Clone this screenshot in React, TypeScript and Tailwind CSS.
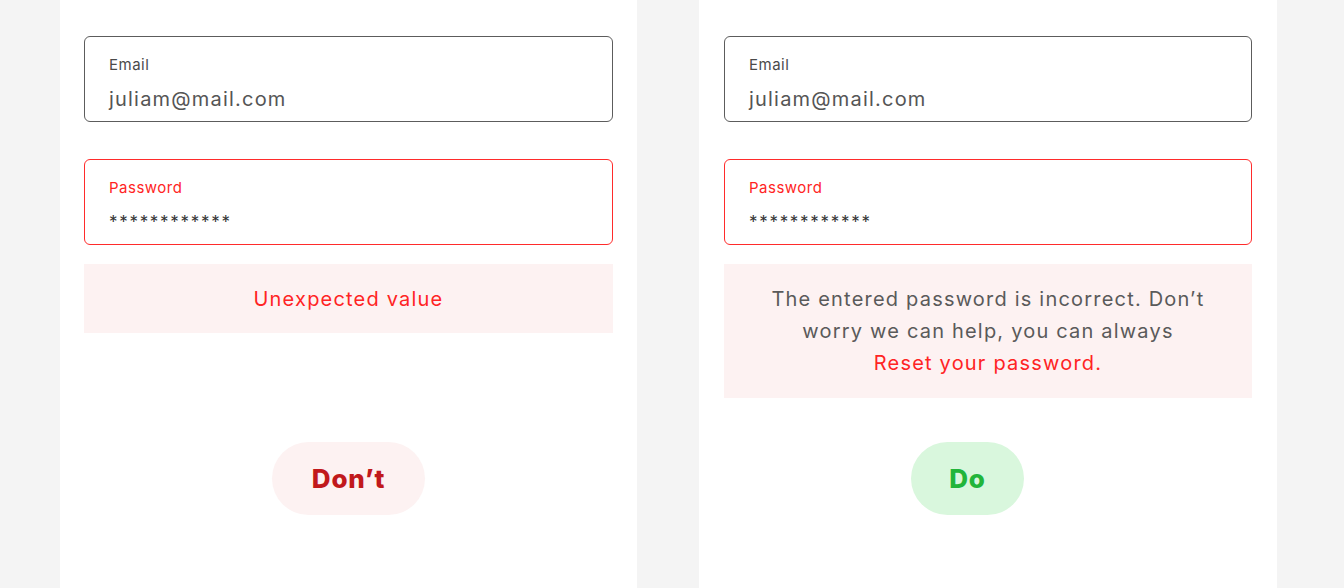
const font = { fontFamily: "Inter, 'Noto Sans', sans-serif" };

function Field({ label, value, error }: { label: string; value: string; error?: boolean }) {
  return (
    <div
      className={`h-[86px] rounded-[6px] border-[1.5px] px-[24px] pt-[17px] ${
        error ? "border-[#ff2b2b]" : "border-[#5c5c5c]"
      }`}
    >
      <div
        className={`text-[15px] leading-[22px] tracking-[0.5px] ${
          error ? "text-[#ff2424]" : "text-[#4a4a4a]"
        }`}
      >
        {label}
      </div>
      <div
        className={`mt-[10px] leading-[26px] ${
          error ? "text-[17px] tracking-[1.7px] text-[#333]" : "text-[20px] tracking-[1.2px] text-[#555]"
        }`}
      >
        {value}
      </div>
    </div>
  );
}

function Panel({
  box,
  children,
  badge,
}: {
  box: string;
  children: React.ReactNode;
  badge: React.ReactNode;
}) {
  return (
    <div className={`${box} h-[588px] bg-white pt-[36px] flex flex-col`}>
      <Field label="Email" value="juliam@mail.com" />
      <div className="mt-[37px]">
        <Field label="Password" value="************" error />
      </div>
      <div className="mt-[19px]">{children}</div>
      {badge}
    </div>
  );
}

export default function App() {
  return (
    <div className="w-[1344px] h-[588px] bg-[#f4f4f4] flex gap-[62px] pl-[60px]" style={font}>
      <Panel
        box="w-[577px] px-[24px]"
        badge={
          <div className="mt-[109px] ml-[188px] w-[153px] h-[73px] rounded-full bg-[#fdf2f2] flex items-center justify-center text-[26px] font-extrabold tracking-[0.8px] text-[#c1191c]">
            Don’t
          </div>
        }
      >
        <div className="h-[69px] bg-[#fdf2f2] flex items-center justify-center text-[20px] tracking-[1.2px] text-[#ff2424]">
          Unexpected value
        </div>
      </Panel>
      <Panel
        box="w-[578px] px-[25px]"
        badge={
          <div className="mt-[44px] ml-[187px] w-[113px] h-[73px] rounded-full bg-[#d9f7dd] flex items-center justify-center text-[26px] font-extrabold tracking-[0.8px] text-[#22b53a]">
            Do
          </div>
        }
      >
        <div className="h-[134px] bg-[#fdf2f2] flex items-center justify-center text-center text-[20px] leading-[32px] tracking-[1.2px] text-[#5a5a5a]">
          <p>
            The entered password is incorrect. Don’t
            <br />
            worry we can help, you can always
            <br />
            <span className="text-[#ff2424]">Reset your password.</span>
          </p>
        </div>
      </Panel>
    </div>
  );
}
